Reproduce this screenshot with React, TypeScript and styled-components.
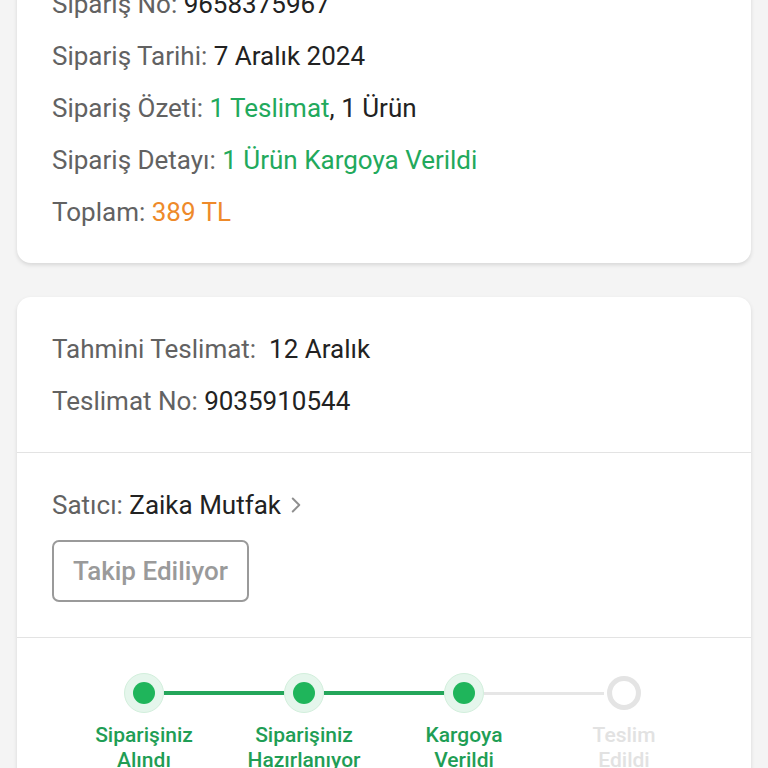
import React from 'react';
import styled, { createGlobalStyle } from 'styled-components';
import { ChevronRight } from 'lucide-react';

const GlobalStyle = createGlobalStyle`
  html, body {
    margin: 0;
    padding: 0;
    background: #f4f4f4;
    font-family: Roboto, "Noto Sans", Arial, sans-serif;
  }
  * { box-sizing: border-box; }
`;

const Page = styled.div`
  display: flex;
  flex-direction: column;
  gap: 34px;
  padding: 0 17px 40px;
  margin-top: -48px;
`;

const Card = styled.div`
  background: #ffffff;
  border-radius: 14px;
  box-shadow: 0 2px 4px rgba(0, 0, 0, 0.12);
  overflow: hidden;
`;

const Section = styled.div<{ $bottom?: number }>`
  padding: 26px 35px ${({ $bottom }) => $bottom ?? 25}px;
  & + & {
    border-top: 1px solid #e3e3e3;
  }
`;

const Row = styled.div`
  height: 52px;
  display: flex;
  align-items: center;
  font-size: 26px;
  color: #626262;
  white-space: pre;
`;

const Value = styled.span<{ $tone?: 'green' | 'orange' | 'dark' }>`
  color: ${({ $tone }) =>
    $tone === 'green' ? '#22a95c' : $tone === 'orange' ? '#ee8a2a' : '#222222'};
`;

const Chevron = styled(ChevronRight)`
  color: #8f8f8f;
  margin-left: 2px;
`;

const FollowButton = styled.button`
  margin-top: 9px;
  height: 62px;
  padding: 0 19px;
  border: 2px solid #9a9a9a;
  border-radius: 7px;
  background: #fff;
  color: #9a9a9a;
  font-family: inherit;
  font-size: 26px;
  font-weight: 500;
`;

const StepSection = styled.div`
  border-top: 1px solid #e3e3e3;
  padding: 35px 47px 20px;
  display: grid;
  grid-template-columns: repeat(4, 160px);
`;

const Step = styled.div`
  display: flex;
  flex-direction: column;
  align-items: center;
`;

const Track = styled.div`
  width: 100%;
  height: 40px;
  display: flex;
  align-items: center;
`;

const Line = styled.div<{ $state: 'done' | 'todo' | 'none' }>`
  flex: 1;
  height: ${({ $state }) => ($state === 'done' ? 4 : 3)}px;
  background: ${({ $state }) =>
    $state === 'done' ? '#24a65a' : $state === 'todo' ? '#e6e6e6' : 'transparent'};
`;

const Dot = styled.div<{ $done: boolean }>`
  width: 40px;
  height: 40px;
  border-radius: 50%;
  display: flex;
  align-items: center;
  justify-content: center;
  background: ${({ $done }) => ($done ? '#e5f6ec' : 'transparent')};
  border: ${({ $done }) => ($done ? '1px solid #d2efdc' : '6px solid #e4e4e4')};
  transform: ${({ $done }) => ($done ? 'none' : 'scale(0.85)')};
`;

const DotCore = styled.div`
  width: 22px;
  height: 22px;
  border-radius: 50%;
  background: #1fb55b;
`;

const StepLabel = styled.div<{ $done: boolean }>`
  margin-top: 10px;
  text-align: center;
  font-size: 21px;
  font-weight: 500;
  line-height: 25px;
  color: ${({ $done }) => ($done ? '#1f9e55' : '#e2e2e2')};
`;

const steps = [
  { label: ['Siparişiniz', 'Alındı'], done: true },
  { label: ['Siparişiniz', 'Hazırlanıyor'], done: true },
  { label: ['Kargoya', 'Verildi'], done: true },
  { label: ['Teslim', 'Edildi'], done: false },
];

export default function App() {
  return (
    <>
      <GlobalStyle />
      <Page>
        <Card>
          <Section>
            <Row>
              Sipariş No: <Value>9658375967</Value>
            </Row>
            <Row>
              Sipariş Tarihi: <Value>7 Aralık 2024</Value>
            </Row>
            <Row>
              Sipariş Özeti: <Value $tone="green">1 Teslimat</Value>
              <Value>, 1 Ürün</Value>
            </Row>
            <Row>
              Sipariş Detayı: <Value $tone="green">1 Ürün Kargoya Verildi</Value>
            </Row>
            <Row>
              Toplam: <Value $tone="orange">389 TL</Value>
            </Row>
          </Section>
        </Card>

        <Card>
          <Section $bottom={25}>
            <Row>
              Tahmini Teslimat:  <Value>12 Aralık</Value>
            </Row>
            <Row>
              Teslimat No: <Value>9035910544</Value>
            </Row>
          </Section>
          <Section $bottom={35}>
            <Row>
              Satıcı: <Value>Zaika Mutfak</Value>
              <Chevron size={26} strokeWidth={1.8} />
            </Row>
            <FollowButton>Takip Ediliyor</FollowButton>
          </Section>
          <StepSection>
            {steps.map((s, i) => {
              const prev = i === 0 ? 'none' : s.done ? 'done' : 'todo';
              const next =
                i === steps.length - 1 ? 'none' : steps[i + 1].done ? 'done' : 'todo';
              return (
                <Step key={i}>
                  <Track>
                    <Line $state={prev} />
                    <Dot $done={s.done}>{s.done && <DotCore />}</Dot>
                    <Line $state={next} />
                  </Track>
                  <StepLabel $done={s.done}>
                    {s.label[0]}
                    <br />
                    {s.label[1]}
                  </StepLabel>
                </Step>
              );
            })}
          </StepSection>
        </Card>
      </Page>
    </>
  );
}
